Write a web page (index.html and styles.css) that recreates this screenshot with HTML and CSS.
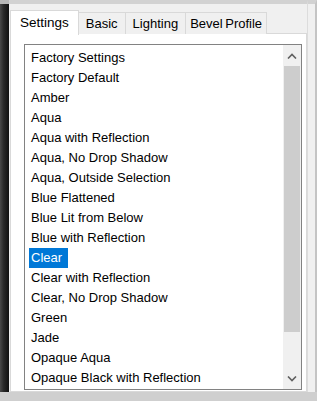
FILE: index.html
```html
<!DOCTYPE html>
<html lang="en">
<head>
    <meta charset="UTF-8">
    <title>Bevel Presets</title>
    <link rel="stylesheet" href="styles.css">
</head>
<body>
    <div class="desktop">
        <div class="backdrop"></div>
        <div class="dialog">
            <div class="tabs">
                <div class="tab active">Settings</div>
                <div class="tab">Basic</div>
                <div class="tab">Lighting</div>
                <div class="tab">Bevel Profile</div>
            </div>
            <div class="tab-panel">
                <div class="listbox">
                    <ul class="items">
                        <li><span>Factory Settings</span></li>
                        <li><span>Factory Default</span></li>
                        <li><span>Amber</span></li>
                        <li><span>Aqua</span></li>
                        <li><span>Aqua with Reflection</span></li>
                        <li><span>Aqua, No Drop Shadow</span></li>
                        <li><span>Aqua, Outside Selection</span></li>
                        <li><span>Blue Flattened</span></li>
                        <li><span>Blue Lit from Below</span></li>
                        <li><span>Blue with Reflection</span></li>
                        <li class="selected"><span>Clear</span></li>
                        <li><span>Clear with Reflection</span></li>
                        <li><span>Clear, No Drop Shadow</span></li>
                        <li><span>Green</span></li>
                        <li><span>Jade</span></li>
                        <li><span>Opaque Aqua</span></li>
                        <li><span>Opaque Black with Reflection</span></li>
                    </ul>
                    <div class="scrollbar">
                        <div class="arrow">
                            <svg width="10" height="6" viewBox="0 0 10 6"><path d="M1 5.5 L5 1.5 L9 5.5" fill="none" stroke="#606060" stroke-width="1.6"/></svg>
                        </div>
                        <div class="thumb"></div>
                        <div class="track"></div>
                        <div class="arrow">
                            <svg width="10" height="6" viewBox="0 0 10 6"><path d="M1 0.5 L5 4.5 L9 0.5" fill="none" stroke="#606060" stroke-width="1.6"/></svg>
                        </div>
                    </div>
                </div>
            </div>
        </div>
        <div class="edge"></div>
    </div>
</body>
</html>
```

FILE: styles.css
```css
* {
    margin: 0;
    padding: 0;
    box-sizing: border-box;
}

body {
    width: 317px;
    height: 401px;
    overflow: hidden;
    font-family: 'Liberation Sans', Arial, sans-serif;
    color: #000;
    background: #cfcfcf;
}

.desktop {
    display: flex;
    height: 392px;
}

.backdrop {
    width: 9px;
    background: linear-gradient(90deg, #4a4a4a 0%, #2a2a2a 40%, #111 100%);
    border-top: 4px solid #b8b8b8;
}

.dialog {
    width: 298px;
    background: #f0f0f0;
    border-top: 4px solid #d2d2d2;
    padding: 6px 0 0 1px;
    display: flex;
    flex-direction: column;
}

.edge {
    flex: 1;
    background: #f0f0f0;
    border-top: 4px solid #d2d2d2;
    border-left: 1px solid #dcdcdc;
    border-right: 2px solid #c4c4c4;
}

.tabs {
    display: flex;
    align-items: flex-end;
    height: 24px;
    position: relative;
    z-index: 1;
}

.tab {
    height: 22px;
    padding: 3px 7px 0;
    font-size: 13px;
    background: #f0f0f0;
    border: 1px solid #d9d9d9;
    border-bottom: none;
    margin-left: -1px;
    color: #000;
    white-space: nowrap;
}

.tab:first-child {
    margin-left: 0;
}

.tab:last-child {
    padding: 3px 4px 0;
    word-spacing: -1px;
}

.tab.active {
    height: 25px;
    margin-bottom: -1px;
    padding: 4px 9px 0 9px;
    background: #fff;
    font-size: 13.5px;
}

.tab-panel {
    flex: 1;
    margin-top: -1px;
    background: #fff;
    border: 1px solid #d9d9d9;
    padding: 10px 4px 0 13px;
}

.listbox {
    display: flex;
    height: 346px;
    border: 1px solid #828282;
    background: #fff;
}

.items {
    flex: 1;
    list-style: none;
    padding: 3px 0 0 4px;
    overflow: hidden;
    font-size: 13px;
}

.items li {
    height: 20px;
    line-height: 20px;
    white-space: nowrap;
}

.items span {
    padding: 1px 2px;
}

.items li.selected span {
    display: inline-block;
    height: 20px;
    line-height: 20px;
    padding: 0 6px 0 2px;
    background: #0078d7;
    color: #fff;
}

.scrollbar {
    width: 18px;
    display: flex;
    flex-direction: column;
    background: #f0f0f0;
}

.arrow {
    height: 21px;
    display: flex;
    align-items: center;
    justify-content: center;
}

.thumb {
    height: 266px;
    margin: 0 1px;
    background: #cdcdcd;
}

.track {
    flex: 1;
}
```
